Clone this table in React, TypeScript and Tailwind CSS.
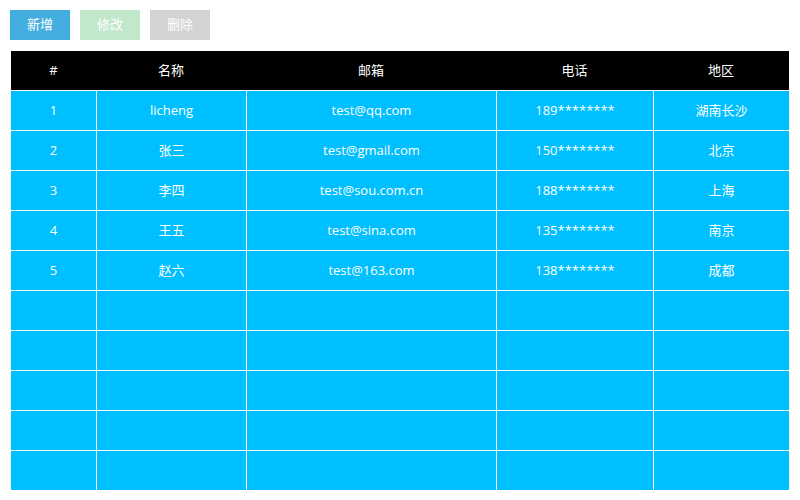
const rows = [
  ["1", "licheng", "test@qq.com", "189********", "湖南长沙"],
  ["2", "张三", "test@gmail.com", "150********", "北京"],
  ["3", "李四", "test@sou.com.cn", "188********", "上海"],
  ["4", "王五", "test@sina.com", "135********", "南京"],
  ["5", "赵六", "test@163.com", "138********", "成都"],
  ["", "", "", "", ""],
  ["", "", "", "", ""],
  ["", "", "", "", ""],
  ["", "", "", "", ""],
  ["", "", "", "", ""],
];

const headers = ["#", "名称", "邮箱", "电话", "地区"];
const cols = "grid grid-cols-[85px_150px_250px_157px_136px]";

const App = () => {
  return (
    <div
      className="w-[800px] h-[500px] bg-white text-[13px] text-white"
      style={{ fontFamily: '"Open Sans", "Noto Sans CJK SC", sans-serif' }}
    >
      <div className="flex gap-[10px] pt-[10px] pl-[10px]">
        <button className="w-[60px] h-[30px] bg-[#45aee0] text-white">新增</button>
        <button className="w-[60px] h-[30px] bg-[#c2e8cb] text-white">修改</button>
        <button className="w-[60px] h-[30px] bg-[#d3d3d3] text-white">删除</button>
      </div>
      <div className="mt-[11px] ml-[11px] w-[778px]">
        <div className={`${cols} h-[39px] bg-black items-center text-center`}>
          {headers.map((h) => (
            <div key={h}>{h}</div>
          ))}
        </div>
        {rows.map((r, i) => (
          <div key={i} className={`${cols} h-[40px] border-t border-white bg-[#00bfff] text-center`}>
            {r.map((c, j) => (
              <div
                key={j}
                className={`flex items-center justify-center ${j > 0 ? "border-l border-white" : ""}`}
              >
                {c}
              </div>
            ))}
          </div>
        ))}
      </div>
    </div>
  );
};

export default App;
